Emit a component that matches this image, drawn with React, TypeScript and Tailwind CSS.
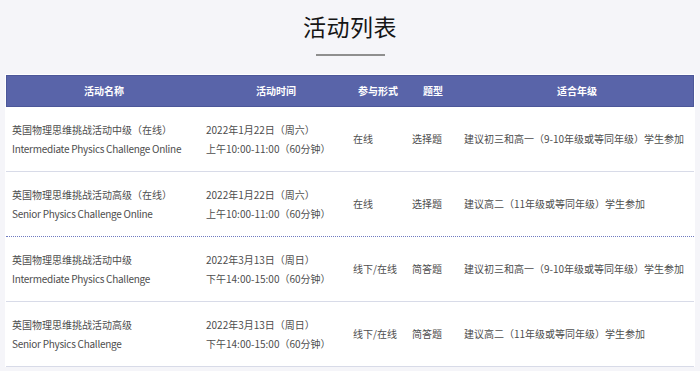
import React from "react";

type Row = {
  cn: string;
  en: string;
  date: string;
  time: string;
  mode: string;
  type: string;
  grade: string;
  dotted?: boolean;
};

const rows: Row[] = [
  {
    cn: "英国物理思维挑战活动中级（在线）",
    en: "Intermediate Physics Challenge Online",
    date: "2022年1月22日（周六）",
    time: "上午10:00-11:00（60分钟）",
    mode: "在线",
    type: "选择题",
    grade: "建议初三和高一（9-10年级或等同年级）学生参加",
  },
  {
    cn: "英国物理思维挑战活动高级（在线）",
    en: "Senior Physics Challenge Online",
    date: "2022年1月22日（周六）",
    time: "上午10:00-11:00（60分钟）",
    mode: "在线",
    type: "选择题",
    grade: "建议高二（11年级或等同年级）学生参加",
    dotted: true,
  },
  {
    cn: "英国物理思维挑战活动中级",
    en: "Intermediate Physics Challenge",
    date: "2022年3月13日（周日）",
    time: "下午14:00-15:00（60分钟）",
    mode: "线下/在线",
    type: "简答题",
    grade: "建议初三和高一（9-10年级或等同年级）学生参加",
  },
  {
    cn: "英国物理思维挑战活动高级",
    en: "Senior Physics Challenge",
    date: "2022年3月13日（周日）",
    time: "下午14:00-15:00（60分钟）",
    mode: "线下/在线",
    type: "简答题",
    grade: "建议高二（11年级或等同年级）学生参加",
  },
];

const cols = "grid grid-cols-[194px_150px_54px_56px_1fr]";

export default function App() {
  return (
    <div
      className="w-[700px] h-[371px] overflow-hidden bg-[#f5f5f9]"
      style={{ fontFamily: '"Noto Sans CJK SC", "Noto Sans", sans-serif' }}
    >
      <div className="flex flex-col items-center pt-[11px]">
        <h1 className="text-[23px] leading-[30px] text-[#161616] font-normal tracking-[0.5px]">
          活动列表
        </h1>
        <div className="mt-[13px] w-[69px] h-[1.5px] bg-[#8f8f8f]" />
      </div>
      <div className="mx-[5px] mt-[18px] bg-white pt-[1px] px-[1px]">
        <div
          className={`${cols} h-[32px] bg-[#5964a9] border border-[#4c5799] text-white text-[10px] font-bold items-center`}
        >
          <div className="text-center">活动名称</div>
          <div className="text-center">活动时间</div>
          <div className="text-center">参与形式</div>
          <div className="text-center">题型</div>
          <div className="text-center">适合年级</div>
        </div>
        {rows.map((r, i) => (
          <div
            key={i}
            className={`${cols} h-[65px] items-center pt-[2px] text-[10px] leading-[18.5px] text-[#4d4d4d] ${
              r.dotted
                ? "border-b border-dotted border-[#6f7ac0]"
                : "border-b border-[#d8dbe8]"
            }`}
          >
            <div className="pl-[6px]">
              <div>{r.cn}</div>
              <div className="tracking-[-0.27px]">{r.en}</div>
            </div>
            <div className="pl-[6px]">
              <div>{r.date}</div>
              <div>{r.time}</div>
            </div>
            <div className="pl-[3px]">{r.mode}</div>
            <div className="pl-[8px]">{r.type}</div>
            <div className="pl-[4px] whitespace-nowrap">{r.grade}</div>
          </div>
        ))}
      </div>
    </div>
  );
}
